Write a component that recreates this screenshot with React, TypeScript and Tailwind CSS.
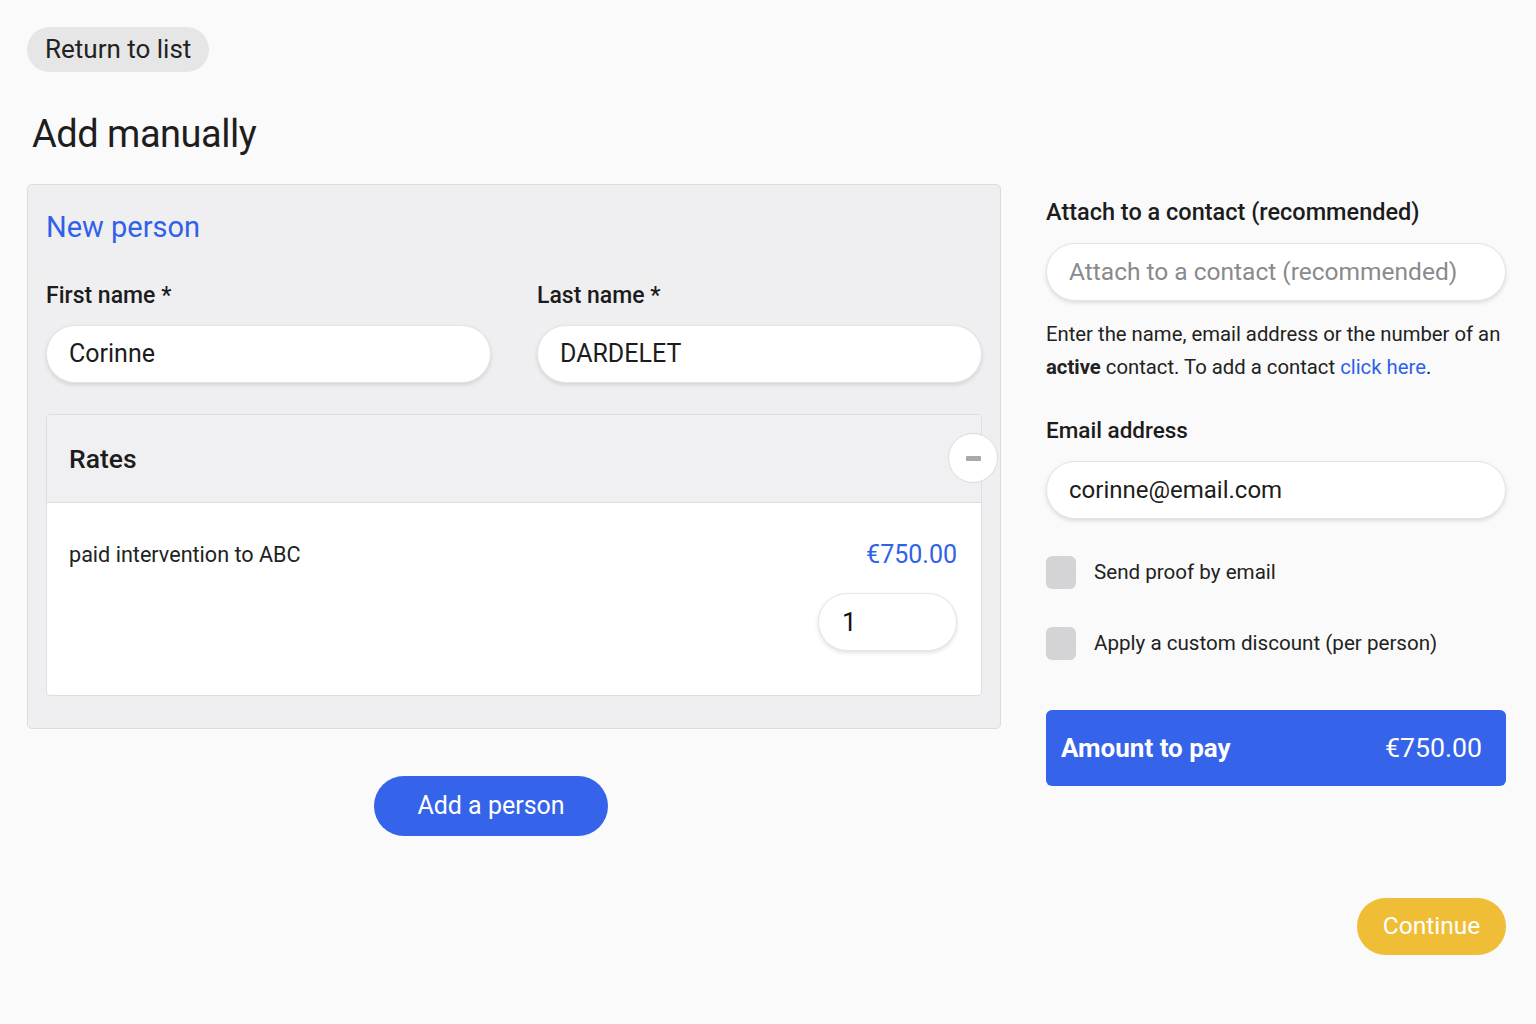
import React from "react";

const inputCls =
  "h-[58px] w-full rounded-full bg-white border border-[#e4e4e6] shadow-[0_2px_4px_rgba(0,0,0,0.12)] px-[22px] flex items-center text-[#1c1c1c] whitespace-nowrap";

function Field({ label, value }: { label: string; value: string }) {
  return (
    <div className="flex flex-col">
      <div className="text-[23px] leading-[28px] font-medium text-[#1c1c1c]">{label}</div>
      <div className={`${inputCls} mt-[15px] text-[25px]`}>{value}</div>
    </div>
  );
}

function Checkbox({ label }: { label: string }) {
  return (
    <div className="flex items-center gap-[18px]">
      <div className="w-[30px] h-[33px] rounded-[6px] bg-[#d4d4d6]" />
      <span className="text-[20.6px] text-[#222]">{label}</span>
    </div>
  );
}

export default function App() {
  return (
    <div
      className="min-h-[1024px] bg-[#fafafa] px-[27px] pt-[27px] text-[#1c1c1c]"
      style={{ fontFamily: "Roboto, 'Liberation Sans', sans-serif" }}
    >
      <button className="h-[45px] px-[18px] rounded-full bg-[#e6e6e7] text-[26px] text-[#222]">
        Return to list
      </button>

      <h1 className="mt-[38px] ml-[5px] text-[38px] leading-[48px] tracking-[-0.5px] text-[#1e1e1e]">Add manually</h1>

      <div className="mt-[26px] grid grid-cols-[974px_460px] gap-x-[45px] items-start">
        {/* left column */}
        <div className="flex flex-col">
          <div className="rounded-[5px] border border-[#dcdcde] bg-[#efeff1] pt-[24px] pl-[18px] pr-[18px] pb-[32px]">
            <div className="text-[29px] leading-[36px] text-[#2f62e9]">New person</div>
            <div className="mt-[37px] grid grid-cols-2 gap-x-[46px]">
              <Field label="First name *" value="Corinne" />
              <Field label="Last name *" value="DARDELET" />
            </div>

            <div className="relative mt-[31px] rounded-[4px] border border-[#dedee0] bg-white">
              <div className="h-[88px] bg-[#f0f0f2] border-b border-[#dedee0] flex items-center pl-[22px] rounded-t-[4px]">
                <span className="text-[26.5px] font-medium text-[#1c1c1c]">Rates</span>
              </div>
              <div className="absolute right-[-17px] top-[18px] w-[50px] h-[50px] rounded-full bg-white border border-[#dcdcde] flex items-center justify-center">
                <div className="w-[15px] h-[5px] bg-[#a9a9ab] rounded-[1px]" />
              </div>
              <div className="pl-[22px] pr-[24px] pt-[35px] pb-[44px] flex flex-col">
                <div className="flex items-center justify-between">
                  <span className="text-[21.6px] leading-[28px] text-[#222]">paid intervention to ABC</span>
                  <span className="text-[25px] leading-[34px] text-[#2f62e9]">€750.00</span>
                </div>
                <div className="mt-[21px] self-end w-[139px] h-[58px] rounded-full bg-white border border-[#e4e4e6] shadow-[0_2px_4px_rgba(0,0,0,0.12)] flex items-center pl-[23px] text-[26px] text-[#111]">
                  1
                </div>
              </div>
            </div>
          </div>

          <button className="mt-[47px] ml-[347px] w-[234px] h-[60px] rounded-full bg-[#3563e9] text-white text-[25px]">
            Add a person
          </button>
        </div>

        {/* right column */}
        <div className="flex flex-col pt-[13px]">
          <div className="text-[23.5px] leading-[30px] font-medium text-[#1c1c1c] whitespace-nowrap">
            Attach to a contact (recommended)
          </div>
          <div className={`${inputCls} mt-[16px] text-[#8a8a8c] text-[24.5px]`}>Attach to a contact (recommended)</div>
          <p className="mt-[17px] mr-[-8px] text-[20.3px] leading-[33px] text-[#222]">
            Enter the name, email address or the number of an <b className="font-bold">active</b> contact. To add a contact{" "}
            <span className="text-[#2f62e9]">click here</span>.
          </p>
          <div className="mt-[31px] text-[22.5px] leading-[30px] font-medium text-[#1c1c1c]">Email address</div>
          <div className={`${inputCls} mt-[16px] text-[24px]`}>corinne@email.com</div>
          <div className="mt-[37px] flex flex-col gap-[38px]">
            <Checkbox label="Send proof by email" />
            <Checkbox label="Apply a custom discount (per person)" />
          </div>
          <div className="mt-[50px] h-[76px] rounded-[6px] bg-[#3563e9] flex items-center justify-between pl-[15px] pr-[24px] text-white">
            <span className="text-[26px] font-bold">Amount to pay</span>
            <span className="text-[26.7px]">€750.00</span>
          </div>
          <button className="mt-[112px] self-end w-[149px] h-[57px] rounded-full bg-[#f0bd36] text-white text-[24.5px]">
            Continue
          </button>
        </div>
      </div>
    </div>
  );
}
